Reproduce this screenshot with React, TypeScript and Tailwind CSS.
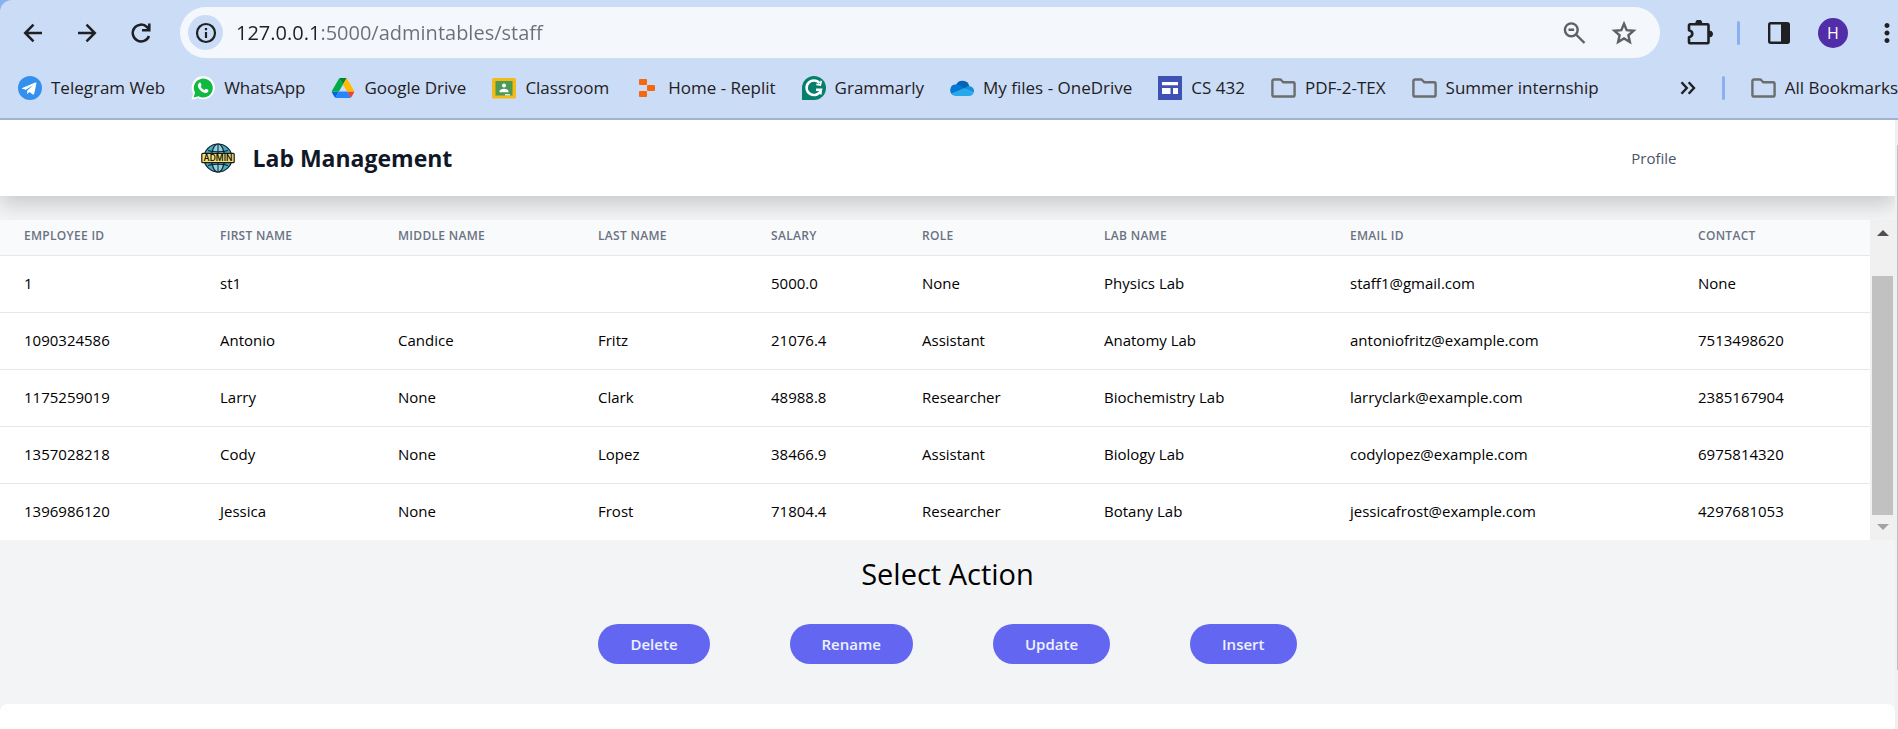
import type { ReactNode } from "react";
import { MdMoreVert } from "react-icons/md";

function Folder() {
  return (
    <svg viewBox="0 0 25 20" className="h-5 w-[25px] shrink-0" fill="none" stroke="#6b6d70" strokeWidth="2.4" strokeLinejoin="round">
      <path d="M3 1.500h6.600l2.800 2.800H22a1.600 1.600 0 0 1 1.600 1.600v11a1.600 1.600 0 0 1-1.600 1.600H3a1.600 1.600 0 0 1-1.600-1.600V3.100A1.600 1.600 0 0 1 3 1.500z" />
    </svg>
  );
}

function Telegram() {
  return (
    <svg viewBox="0 0 24 24" className="size-6 shrink-0">
      <circle cx="12" cy="12" r="12" fill="#3390ec" />
      <path d="M4.300 12 17.200 6.500c.8-.3 1.400.1 1.200 1.100l-2.200 10.200c-.2.8-.7 1-1.400.6l-3.300-2.400-1.700 1.600c-.3.300-.5.400-.8.400l.3-3.500 5.900-5.300-7.400 4.600-3.300-1c-.7-.2-.7-.5-.2-.8z" fill="#fff" />
    </svg>
  );
}

function WhatsApp() {
  return (
    <svg viewBox="0 0 24 24" className="size-6 shrink-0">
      <path d="M0.500 23.700 2.200 17.500A11.600 11.600 0 1 1 7 22z" fill="#fff" />
      <path d="M2.600 21.600 4 16.700a9.500 9.500 0 1 1 3.600 3.600z" fill="#11b93e" />
      <path d="M8.400 6.800c.5-.4 1.100-.3 1.300.3l.8 1.900c.2.600-.8 1.300-.8 1.600 0 .6 2.300 3.200 3.600 3.400.5.100 1.200-1.400 1.700-1.200l2.100 1c.5.300.3 1.500-.1 2.100-.7.900-1.900 1.300-3 1.100-3.500-.6-6.700-3.900-7.100-6.900-.2-1.300.6-2.600 1.500-3.300z" fill="#fff" />
    </svg>
  );
}

function Drive() {
  return (
    <svg viewBox="0 0 87.300 78" className="h-5 w-6 shrink-0">
      <path d="m6.600 66.850 3.850 6.650c.8 1.400 1.950 2.500 3.300 3.300l13.750-23.800h-27.500c0 1.550.4 3.100 1.200 4.500z" fill="#0066da" />
      <path d="m43.650 25-13.750-23.800c-1.350.8-2.500 1.900-3.300 3.300l-25.400 44a9.060 9.060 0 0 0 -1.200 4.500h27.500z" fill="#00ac47" />
      <path d="m73.550 76.800c1.350-.8 2.500-1.900 3.300-3.300l1.600-2.750 7.650-13.250c.8-1.400 1.200-2.950 1.200-4.500h-27.502l5.852 11.500z" fill="#ea4335" />
      <path d="m43.650 25 13.750-23.800c-1.350-.8-2.900-1.200-4.500-1.200h-18.500c-1.600 0-3.150.45-4.500 1.200z" fill="#00832d" />
      <path d="m59.800 53h-32.300l-13.750 23.800c1.350.8 2.900 1.200 4.500 1.200h50.800c1.600 0 3.150-.45 4.500-1.200z" fill="#2684fc" />
      <path d="m73.400 26.500-12.700-22c-.8-1.400-1.950-2.500-3.300-3.300l-13.750 23.800 16.150 28h27.450c0-1.550-.4-3.100-1.200-4.500z" fill="#ffba00" />
    </svg>
  );
}

function Classroom() {
  return (
    <svg viewBox="0 0 24 24" className="size-6 shrink-0">
      <rect y="2" width="24" height="20.500" rx="1.500" fill="#f5ba15" />
      <rect x="3.500" y="5" width="17" height="14.500" fill="#4b9a55" />
      <circle cx="12" cy="9.600" r="2" fill="#fff" />
      <path d="M7.500 15.500c0-3.600 9-3.600 9 0v.8h-9z" fill="#fff" />
      <path d="M13 18h5v1.500h-5z" fill="#dfe9df" />
    </svg>
  );
}

function Replit() {
  return (
    <svg viewBox="-4 0 24 18" className="h-[18px] w-6 shrink-0" fill="#f5680c">
      <rect width="8" height="6" rx="1" />
      <rect x="8" y="6" width="8" height="6" rx="1" />
      <rect y="12" width="8" height="6" rx="1" />
    </svg>
  );
}

function Grammarly() {
  return (
    <svg viewBox="0 0 24 24" className="size-6 shrink-0">
      <path d="M12 0a12 12 0 1 1 0 24H0V12A12 12 0 0 1 12 0z" fill="#067f6b" />
      <path d="M17.600 7.200A7.300 7.300 0 1 0 18.900 13.800H14" fill="none" stroke="#fff" strokeWidth="2.500" />
      <path d="M18.900 13.400v5.200M19.300 4.800l-1 4.300-4-.8" fill="none" stroke="#fff" strokeWidth="1.700" />
    </svg>
  );
}

function OneDrive() {
  return (
    <svg viewBox="0 0 24 16" className="h-4 w-6 shrink-0">
      <path d="M6 5.200A7 7 0 0 1 19.300 6L12 11z" fill="#0364b8" />
      <path d="M6 4.600c2 0 3.300.5 4.500 1.300L16 9.200 4 15.300A5.500 5.500 0 0 1 6 4.600z" fill="#0078d4" />
      <path d="M14.500 8.300C16 7 17.400 5.800 19.200 5.900A5 5 0 0 1 23.500 13z" fill="#1490df" />
      <path d="M1.300 13.500 14.500 8l9 5.100A4.500 4.500 0 0 1 19.300 16H5.500a5 5 0 0 1-4.200-2.500z" fill="#28a8ea" />
    </svg>
  );
}

function Sites() {
  return (
    <svg viewBox="0 0 24 24" className="size-6 shrink-0">
      <path d="M0 0h24v24H0z" fill="#3f51b5" />
      <path d="M4 6h16v3.200H4zM4 12h8.500v6H4zM15 12h5v6h-5z" fill="#fff" />
    </svg>
  );
}

function AdminGlobe() {
  return (
    <svg viewBox="0 0 34 30" className="h-[30px] w-[34px] shrink-0" role="img" aria-label="Admin">
      <g stroke="#10222c" strokeWidth="1.200" fill="none">
        <circle cx="17" cy="15" r="14" fill="#4aa9c4" />
        <ellipse cx="17" cy="15" rx="6.500" ry="14" fill="#8fd0e0" />
        <path d="M17 1v28" strokeWidth="1" />
        <path d="M7 7.500c5 1.800 15 1.800 20 0M7 22.500c5-1.800 15-1.800 20 0" />
      </g>
      <rect x="0.800" y="10.300" width="32.400" height="9.400" rx="1" fill="#f6df78" stroke="#1b1b12" strokeWidth="1.200" />
      <text x="17" y="18" textAnchor="middle" fontSize="8.500" fontWeight="600" fill="#1b1b12" fontFamily="Inter, sans-serif">ADMIN</text>
    </svg>
  );
}

function Bookmark({ icon, label }: { icon: ReactNode; label: string }) {
  return (
    <a href="#" className="flex shrink-0 items-center gap-[9px]">
      {icon}
      {label}
    </a>
  );
}

const folders = ["PDF-2-TEX", "Summer internship"];

const bookmarks = [
  { icon: <Telegram />, label: "Telegram Web" },
  { icon: <WhatsApp />, label: "WhatsApp" },
  { icon: <Drive />, label: "Google Drive" },
  { icon: <Classroom />, label: "Classroom" },
  { icon: <Replit />, label: "Home - Replit" },
  { icon: <Grammarly />, label: "Grammarly" },
  { icon: <OneDrive />, label: "My files - OneDrive" },
  { icon: <Sites />, label: "CS 432" },
];

function BrowserChrome() {
  return (
    <header className="bg-[#8ab0f0]">
      <div className="overflow-hidden rounded-tl-xl border-b-2 border-[#a2b3d0] bg-[#cbdcf6] text-[#1f2023]">
        <div className="flex items-center pt-[7px]">
          <button aria-label="Back" className="ml-5">
            <svg viewBox="0 0 26 26" className="size-[26px]" fill="none" stroke="currentColor" strokeWidth="2.500">
              <path d="M22 13H5.500M13.500 4.700 5.200 13l8.300 8.300" />
            </svg>
          </button>
          <button aria-label="Forward" className="ml-7">
            <svg viewBox="0 0 26 26" className="size-[26px]" fill="none" stroke="currentColor" strokeWidth="2.500">
              <path d="M4 13h16.500M12.500 4.700l8.300 8.300-8.300 8.300" />
            </svg>
          </button>
          <button aria-label="Reload" className="ml-[27px]">
            <svg viewBox="0 0 28 28" className="size-7" fill="none" stroke="currentColor" strokeWidth="2.500">
              <path d="M22 17A8.400 8.400 0 1 1 20 8l2.500 2.500M15 11.300h7.300V4.500" />
            </svg>
          </button>
          <div className="ml-[25px] flex h-[51px] flex-1 items-center rounded-full bg-[#f4f8fd] pr-[22px] pl-2">
            <button aria-label="Site information" className="flex size-[35px] items-center justify-center rounded-full bg-[#cbdcf6]">
              <svg viewBox="0 0 22 22" className="size-[22px]" fill="none" stroke="currentColor" strokeWidth="2.200">
                <circle cx="11" cy="11" r="9" />
                <path d="M11 10v6M11 6v2.300" />
              </svg>
            </button>
            <input
              aria-label="Address"
              defaultValue="127.0.0.1:5000/admintables/staff"
              className="ml-[13px] min-w-0 flex-1 bg-[linear-gradient(to_right,#1f2023_85px,#6b6f75_85px)] bg-clip-text text-xl text-transparent outline-none"
            />
            <button aria-label="Zoom" className="mr-6">
              <svg viewBox="0 0 24 24" className="size-6" fill="none" stroke="#5f6063" strokeWidth="2.400">
                <circle cx="9.300" cy="8.800" r="6.400" />
                <path d="m14 13.500 8.500 8.500M6.500 8.800h5.600" />
              </svg>
            </button>
            <button aria-label="Bookmark this page">
              <svg viewBox="0 0 28 28" className="size-7" fill="none" stroke="#5f6063" strokeWidth="2.400">
                <path d="m14 4.800 2.700 6.400 6.900.6-5.200 4.500 1.500 6.800-5.900-3.600-5.900 3.600 1.500-6.800-5.200-4.500 6.900-.6z" />
              </svg>
            </button>
          </div>
          <button aria-label="Extensions" className="ml-[27px]">
            <svg viewBox="0 0 26 26" className="size-[26px]" fill="none" stroke="#1f2023" strokeWidth="2.600" strokeLinejoin="round">
              <path d="M3 4.300h17.500a1 1 0 0 1 1 1v17a1 1 0 0 1-1 1H3a1 1 0 0 1-1-1v-5c4.400-1 4.400-6 0-7V5.300a1 1 0 0 1 1-1z" />
              <path d="M8.800 3a3 3 0 0 1 6 0zM22.500 11a3 3 0 0 1 0 6z" fill="#1f2023" strokeWidth="1" />
            </svg>
          </button>
          <span className="ml-6 h-6 w-[3px] rounded-full bg-[#8ab0f0]" />
          <button aria-label="Side panel" className="ml-7">
            <svg viewBox="0 0 22 22" className="size-[22px]" fill="none" stroke="#1f2023" strokeWidth="2.400">
              <rect x="1.200" y="1.200" width="19.600" height="19.600" rx="1.500" />
              <path d="M13 1h7.500v20H13z" fill="#1f2023" stroke="none" />
            </svg>
          </button>
          <button aria-label="Account" className="ml-7 size-[30px] rounded-full bg-[#512da8] text-base leading-none text-white">H</button>
          <button aria-label="Menu" className="-mr-1 ml-6 text-[30px]"><MdMoreVert /></button>
        </div>
        <nav aria-label="Bookmarks" className="flex h-[60px] items-center gap-[26px] pl-[18px] text-[17px] whitespace-nowrap">
          {bookmarks.map((b) => (
            <Bookmark key={b.label} icon={b.icon} label={b.label} />
          ))}
          {folders.map((f) => (
            <Bookmark key={f} icon={<Folder />} label={f} />
          ))}
          <button aria-label="More bookmarks" className="ml-auto">
            <svg viewBox="0 0 16 14" className="h-3.5 w-4" fill="none" stroke="#1f2023" strokeWidth="2.400">
              <path d="m1.500 1.200 5.300 5.800-5.300 5.800M8.700 1.200 14 7l-5.300 5.800" />
            </svg>
          </button>
          <span className="h-6 w-[3px] shrink-0 rounded-full bg-[#8ab0f0]" />
          <Bookmark icon={<Folder />} label="All Bookmarks" />
        </nav>
      </div>
    </header>
  );
}

const columns = [
  { name: "Employee ID", width: "w-[196px]" },
  { name: "First Name", width: "w-[178px]" },
  { name: "Middle Name", width: "w-[200px]" },
  { name: "Last Name", width: "w-[173px]" },
  { name: "Salary", width: "w-[151px]" },
  { name: "Role", width: "w-[182px]" },
  { name: "Lab Name", width: "w-[246px]" },
  { name: "Email ID", width: "w-[348px]" },
  { name: "Contact", width: "w-[196px]" },
];

const staff = [
  ["1", "st1", "", "", "5000.0", "None", "Physics Lab", "staff1@gmail.com", "None"],
  ["1090324586", "Antonio", "Candice", "Fritz", "21076.4", "Assistant", "Anatomy Lab", "antoniofritz@example.com", "7513498620"],
  ["1175259019", "Larry", "None", "Clark", "48988.8", "Researcher", "Biochemistry Lab", "larryclark@example.com", "2385167904"],
  ["1357028218", "Cody", "None", "Lopez", "38466.9", "Assistant", "Biology Lab", "codylopez@example.com", "6975814320"],
  ["1396986120", "Jessica", "None", "Frost", "71804.4", "Researcher", "Botany Lab", "jessicafrost@example.com", "4297681053"],
];

function StaffTable() {
  return (
    <div className="mt-6 flex">
      <table className="min-w-0 flex-1 table-fixed bg-white text-left">
        <thead className="bg-[#f9fafc]">
          <tr className="border-b border-gray-200">
            {columns.map((c) => (
              <th key={c.name} scope="col" className={`${c.width} px-6 pt-2 pb-[11px] text-xs font-semibold tracking-wide text-gray-500 uppercase`}>
                {c.name}
              </th>
            ))}
          </tr>
        </thead>
        <tbody className="divide-y divide-gray-200">
          {staff.map((row) => (
            <tr key={row[0]}>
              {row.map((cell, i) => (
                <td key={columns[i].name} className="px-6 pt-[15px] pb-[17px] text-[15px] leading-6 whitespace-nowrap">
                  {cell}
                </td>
              ))}
            </tr>
          ))}
        </tbody>
      </table>
      <div aria-hidden="true" className="flex w-[25px] flex-col items-center bg-[#f0f0f0] pt-2.5 pb-2.5">
        <svg viewBox="0 0 12 6" className="h-1.5 w-3" fill="#505050"><path d="M6 0l6 6H0z" /></svg>
        <div className="mt-10 mb-[9px] w-[21px] flex-1 bg-[#c1c1c1]" />
        <svg viewBox="0 0 12 6" className="h-1.5 w-3" fill="#a3a3a3"><path d="M0 0h12L6 6z" /></svg>
      </div>
    </div>
  );
}

const actions = ["Delete", "Rename", "Update", "Insert"];

export default function App() {
  return (
    <div className="flex min-h-screen flex-col font-['Open_Sans',sans-serif] text-black">
      <BrowserChrome />
      <div className="flex flex-1">
        <div className="flex min-w-0 flex-1 flex-col overflow-hidden bg-[#f3f4f6]">
          <header className="bg-white shadow-[0_8px_20px_rgba(0,0,0,0.18)]">
            <div className="mx-auto flex h-[76px] max-w-[1534px] items-center px-5">
              <a href="#" className="flex items-center gap-[18px] text-[23px] font-bold text-gray-900">
                <AdminGlobe />
                Lab Management
              </a>
              <a href="#" className="mr-[18px] ml-auto text-[15px] text-gray-600">Profile</a>
            </div>
          </header>
          <main className="flex flex-1 flex-col">
            <StaffTable />
            <h1 className="mt-3.5 text-center text-[29px] leading-10">Select Action</h1>
            <div className="mt-[30px] mb-10 flex justify-center gap-20">
              {actions.map((a) => (
                <button key={a} className="h-10 rounded-full bg-[#6366f1] px-8 text-[15px] font-semibold text-indigo-50">
                  {a}
                </button>
              ))}
            </div>
            <section className="flex-1 rounded-t-lg bg-white" />
          </main>
        </div>
        <div aria-hidden="true" className="flex w-[3px] flex-col items-end bg-[#f0f0f0] pt-[25px]">
          <div className="h-[525px] w-px bg-[#c1c1c1]" />
        </div>
      </div>
    </div>
  );
}
